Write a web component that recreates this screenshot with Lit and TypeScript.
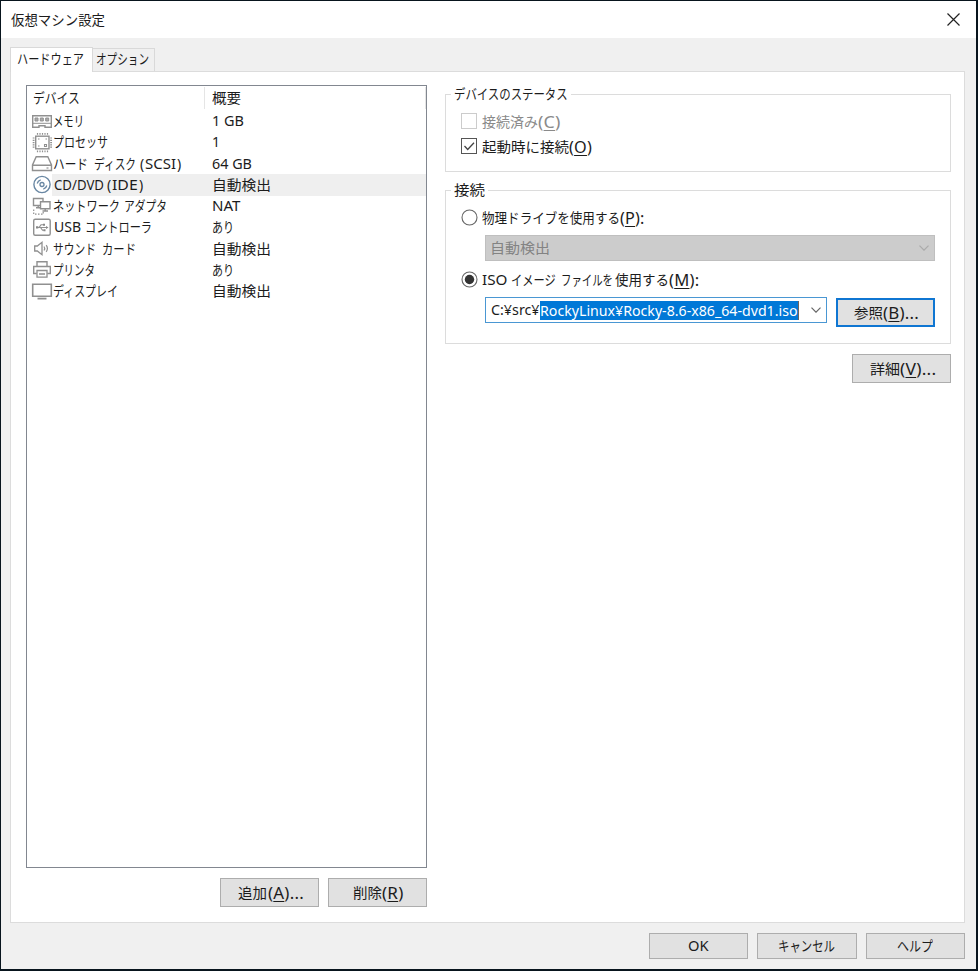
import { LitElement, html, css, svg, nothing } from "lit";
import { customElement, property, state } from "lit/decorators.js";
import { styleMap } from "lit/directives/style-map.js";

/** Text run condensed or widened horizontally to a given advance width. */
@customElement("fit-text")
class FitText extends LitElement {
  @property({ type: Number }) width = 0;
  @state() private scale = 1;
  static styles = css`
    :host { display: inline-block; white-space: pre; flex: none; }
    .box { display: block; }
    .run { display: inline-block; transform-origin: 0 50%; white-space: pre; }
  `;
  firstUpdated() {
    const run = this.renderRoot.querySelector(".run") as HTMLElement;
    const natural = run.offsetWidth;
    if (natural && this.width) this.scale = this.width / natural;
  }
  render() {
    return html`<span class="box" style=${styleMap({ width: this.width + "px" })}
      ><span class="run" style=${styleMap({ transform: `scaleX(${this.scale})` })}><slot></slot></span></span>`;
  }
}

type Run = [text: string, width: number, gap?: number];
const runs = (list: Run[]) =>
  list.map(([text, width, gap]) => {
    const key = /^\((\w)\)(.*)$/.exec(text);
    return html`<fit-text class=${key ? "key" : ""} .width=${width} style=${styleMap({ marginLeft: (gap ?? 0) + "px" })}
      >${key ? html`(<u>${key[1]}</u>)${key[2]}` : text}</fit-text>`;
  });

const icons = {
  memory: svg`<path d="M1.700 4.700h18.600v11.500H14v-1.500H8v1.500H1.700z"/><path d="M4 7h3v3H4zM9.300 7h3v3h-3zM14.700 7h3v3h-3z" fill="#aaa" stroke-width="1"/><path d="M2 12.300h18" stroke-width="1"/>`,
  cpu: svg`<rect x="4.700" y="4.200" width="13.300" height="12.600"/><path d="M6.500 1v1.800M9 1v1.800M11.500 1v1.800M14 1v1.800M16.500 1v1.800M6.500 18.500v1.800M9 18.500v1.800M11.500 18.500v1.800M14 18.500v1.800M16.500 18.500v1.800M1.700 6h1.800M1.700 8.300h1.800M1.700 10.600h1.800M1.700 12.900h1.800M1.700 15.200h1.800M19.200 6H21M19.200 8.300H21M19.200 10.600H21M19.200 12.900H21M19.200 15.200H21" stroke-width="1.200"/><path d="M7 7h1.500M14.500 7H16M7 14h1.500M13.500 12.500h2v2h-2z" stroke-width="1.100"/>`,
  disk: svg`<path d="M5.200 3.700h11.600l3.700 8.300v5.500H1.500V12zM1.500 12.200h19"/><path d="M15.500 15h2" stroke-width="1.200"/>`,
  cd: svg`<circle cx="11" cy="10.500" r="8.100" stroke="#6987a3"/><circle cx="11" cy="10.500" r="2" stroke="#6987a3" stroke-width="1.300"/><path d="M6.200 9.500a5 5 0 0 1 3.500-3.700M15.800 11.500a5 5 0 0 1-3.500 3.700" stroke="#6987a3" stroke-width="1.300"/>`,
  network: svg`<path d="M2.500 2.500h9.500v7H2.500zM5 11.800h4.500M7.200 9.500v2"/><path d="M9.500 5.700h9.500v7H9.500z" fill="#fff"/><path d="M14.200 12.700v2M11.500 15h5.500"/><path d="M2.700 13.500v4.700h9.500V16" stroke-dasharray="1.500 1.500" stroke-width="1.200"/>`,
  usb: svg`<rect x="2.700" y="2.200" width="16.500" height="16" rx="1.500"/><path d="M6 10.500h10M8 10.500l2-2.700h2.500M9.500 10.500l2 2.700h1.500" stroke-width="1.100"/><path d="M5 9.300h2.300v2.300H5zM12 6.800h2v2h-2zM12.500 12.300h2v2h-2zM15 9l2.500 1.500L15 12z" fill="#888" stroke="none"/>`,
  sound: svg`<path d="M3.700 8h2.600l4.700-3.700v12.400L6.300 13H3.700z" stroke-width="1.300"/><path d="M13 8.500q1.500 2 0 4M15.200 7.200q2.400 3.300 0 6.600" stroke-width="1.200"/>`,
  printer: svg`<path d="M6 7.500V2.700h10v4.800M5.700 14.500H2.700v-7h16.600v7h-3"/><path d="M6 11.500h10v6.700H6zM8 15h6" stroke-width="1.300"/>`,
  display: svg`<path d="M1.700 3.200h18.600v12H1.700z" stroke-width="1.600"/><path d="M6.500 17.600h9" stroke-width="1.800"/>`,
};
type IconName = keyof typeof icons;

interface Device { icon: IconName; name: Run[]; summary: Run[]; selected?: boolean }
const auto: Run[] = [["自動検出", 59]];
const devices: Device[] = [
  { icon: "memory", name: [["メモリ", 31]], summary: [["1 GB", 32]] },
  { icon: "cpu", name: [["プロセッサ", 55]], summary: [["1", 8]] },
  { icon: "disk", name: [["ハード", 35], ["ディスク", 42, 6], ["(", 4, 4], ["SCSI", 31, 1], [")", 4, 1]], summary: [["64 GB", 40]] },
  { icon: "cd", name: [["CD/DVD", 50, 1], ["(", 4, 3], ["IDE", 26, 1], [")", 4, 1]], summary: auto, selected: true },
  { icon: "network", name: [["ネットワーク", 67], ["アダプタ", 43, 4]], summary: [["NAT", 28]] },
  { icon: "usb", name: [["USB", 27, 1], ["コントローラ", 67, 4]], summary: [["あり", 22]] },
  { icon: "sound", name: [["サウンド", 43], ["カード", 34, 6]], summary: auto },
  { icon: "printer", name: [["プリンタ", 42]], summary: [["あり", 22]] },
  { icon: "display", name: [["ディスプレイ", 65]], summary: auto },
];

@customElement("app-root")
class AppRoot extends LitElement {
  static styles = css`
    :host { display: block; width: 978px; height: 971px; font: 14px/20px "Noto Sans", "Noto Sans CJK JP", sans-serif; color: #1c1c1c; }
    * { box-sizing: border-box; }
    .window { width: 978px; height: 971px; border: solid #08141d; border-width: 1px 2px 2px 1px; background: #f0f0f0; display: flex; flex-direction: column; overflow: hidden; }
    .title { height: 37px; flex: none; background: #fff; display: flex; align-items: center; justify-content: space-between; padding: 0 16px 0 10px; }
    .close { width: 13px; height: 13px; }
    .key { font-size: 15.5px; line-height: 20px; letter-spacing: .2px; }
    .key u { text-underline-offset: 2px; text-decoration-thickness: 1px; }
    .tabs { display: flex; height: 33px; align-items: flex-end; padding-left: 9px; flex: none; }
    .tab { height: 23px; width: 62px; border: 1px solid #d9d9d9; border-left: 0; border-bottom: 0; display: flex; justify-content: center; align-items: center; background: #f0f0f0; padding: 0 2px 2px 0; }
    .tab.on { height: 25px; width: 83px; background: #fff; border-left: 1px solid #d9d9d9; margin-bottom: -1px; z-index: 1; padding-bottom: 3px; }
    .page { margin: 0 12px 0 9px; width: 955px; height: 852px; flex: none; border: 1px solid #dcdcdc; background: #fff; display: flex; padding: 13px 13px 0 15px; gap: 18px; }
    .left { width: 401px; }
    .list { width: 401px; height: 783px; border: 1px solid #828790; }
    .head, .row { display: grid; grid-template-columns: 178px 221px; align-items: center; }
    .head { height: 24.5px; padding-bottom: 1px; }
    .head > span { height: 22px; border-right: 1px solid #e5e5e5; padding-left: 6px; display: flex; align-items: center; }
    .head > span + span { padding-left: 7px; }
    .row { height: 21.25px; }
    .row.on { background: linear-gradient(90deg, #fff 25px, #efefef 25px); }
    .name { display: flex; align-items: center; padding-left: 4px; }
    .icon { width: 22px; height: 21px; flex: none; fill: none; stroke: #909090; stroke-width: 1.4; }
    .summary { padding-left: 7px; display: flex; }
    .buttons { display: flex; justify-content: flex-end; gap: 9px; padding-top: 10px; }
    .btn { width: 99px; height: 29px; border: 1px solid #adadad; background: #e1e1e1; font: inherit; color: inherit; padding: 0; display: flex; align-items: center; justify-content: center; flex: none; }
    .btn.focus { border: 2px solid #0f76d2; }
    .right { width: 506px; display: flex; flex-direction: column; padding-top: 9px; }
    fieldset { margin: 0; min-width: 0; border: 1px solid #dcdcdc; position: relative; padding: 0 15px; width: 506px; flex: none; }
    .status { height: 78px; padding-top: 16px; }
    .connect { height: 154px; margin-top: 18px; padding-top: 16px; }
    .legend { position: absolute; top: -11px; left: 5px; background: #fff; padding: 0 3px; display: flex; }
    .opt { display: flex; align-items: center; gap: 4px; height: 21px; }
    .opt > span { display: flex; align-items: center; }
    .opt + .opt { margin-top: 4px; }
    .off { color: #8a8a8a; }
    .mark { width: 17px; height: 17px; flex: none; fill: #fff; }
    .combo { height: 26px; border: 1px solid #bfbfbf; background: #ccc; margin-left: 24px; width: 450px; display: flex; align-items: center; justify-content: space-between; padding: 0 5px 0 4px; margin-top: 7px; color: #838383; }
    .chev { width: 10px; height: 6px; fill: none; stroke: #aaa; stroke-width: 1.2; }
    .iso { margin-top: 8px; }
    .pick { display: flex; gap: 9px; margin: 7px 0 0 24px; }
    .pick .btn { margin-top: 1px; }
    .combo.live { margin: 0; width: 342px; background: #fff; border-color: #4a97d3; color: #1c1c1c; padding: 0 5px; }
    .path { display: flex; align-items: center; }
    .sel { background: #0078d7; color: #fff; height: 19px; line-height: 19px; display: flex; }
    .caret { width: 1px; height: 19px; background: #6d645c; }
    .live .chev { stroke: #666; }
    .more { align-self: flex-end; margin-top: 10px; }
    .footer { display: flex; justify-content: flex-end; gap: 9px; padding: 10px 11px 0 0; }
    .footer .btn { height: 26px; width: 99.500px; }
  `;

  private button(label: Run[], kind = "") {
    return html`<button class="btn ${kind}">${runs(label)}</button>`;
  }
  private check(on: boolean) {
    return html`<svg class="mark" viewBox="0 0 17 17"><rect x=".5" y=".5" width="15" height="15" stroke=${on ? "#555" : "#ccc"}/>${on ? svg`<path d="M3.500 8l3.200 3.500L13 4.800" fill="none" stroke="#444" stroke-width="1.300"/>` : nothing}</svg>`;
  }
  private radio(on: boolean) {
    return html`<svg class="mark" viewBox="0 0 17 17"><circle cx="8.500" cy="8.500" r="7.500" stroke="#666" stroke-width="1.100"/>${on ? svg`<circle cx="8.500" cy="8.500" r="4.700" fill="#333"/>` : nothing}</svg>`;
  }
  private chevron() {
    return html`<svg class="chev" viewBox="0 0 10 6"><path d="M.5.700L5 5.200 9.500.700"/></svg>`;
  }

  render() {
    return html`<div class="window">
      <div class="title"><span>${runs([["仮想マシン設定", 94]])}</span>
        <svg class="close" viewBox="0 0 13 13"><path d="M.5.500l12 12M12.500.500l-12 12" stroke="#222" stroke-width="1.200"/></svg></div>
      <div class="tabs"><div class="tab on">${runs([["ハードウェア", 67]])}</div><div class="tab">${runs([["オプション", 53]])}</div></div>
      <div class="page">
        <div class="left">
          <div class="list">
            <div class="head"><span>${runs([["デバイス", 47]])}</span><span>${runs([["概要", 29]])}</span></div>
            ${devices.map((d) => html`<div class="row ${d.selected ? "on" : ""}">
              <span class="name"><svg class="icon" viewBox="0 0 22 21">${icons[d.icon]}</svg>${runs(d.name)}</span>
              <span class="summary">${runs(d.summary)}</span></div>`)}
          </div>
          <div class="buttons">${this.button([["追加", 29], ["(A)...", 36]])}${this.button([["削除", 29], ["(R)", 22]])}</div>
        </div>
        <div class="right">
          <fieldset class="status"><span class="legend">${runs([["デバイスのステータス", 114]])}</span>
            <div class="opt off">${this.check(false)}<span>${runs([["接続済み", 56], ["(C)", 23]])}</span></div>
            <div class="opt">${this.check(true)}<span>${runs([["起動時に接続", 87], ["(O)", 23]])}</span></div>
          </fieldset>
          <fieldset class="connect"><span class="legend">${runs([["接続", 31]])}</span>
            <div class="opt">${this.radio(false)}<span>${runs([["物理ドライブを使用する", 138], ["(P):", 25]])}</span></div>
            <div class="combo">${runs([["自動検出", 60]])}${this.chevron()}</div>
            <div class="opt iso">${this.radio(true)}<span>${runs([["ISO", 25], ["イメージ", 45, 4], ["ファイルを", 52, 5], ["使用する", 54, 2], ["(M):", 30]])}</span></div>
            <div class="pick"><div class="combo live"><span class="path">${runs([["C:¥src¥", 49]])}<span class="sel">${runs([["RockyLinux¥Rocky-8.6-x86_64-dvd1.iso", 258]])}</span><span class="caret"></span></span>${this.chevron()}</div>
              ${this.button([["参照", 29], ["(B)...", 36]], "focus")}</div>
          </fieldset>
          <div class="more">${this.button([["詳細", 30], ["(V)...", 36]])}</div>
        </div>
      </div>
      <div class="footer">${this.button([["OK", 21]])}${this.button([["キャンセル", 57]])}${this.button([["ヘルプ", 36]])}</div>
    </div>`;
  }
}
